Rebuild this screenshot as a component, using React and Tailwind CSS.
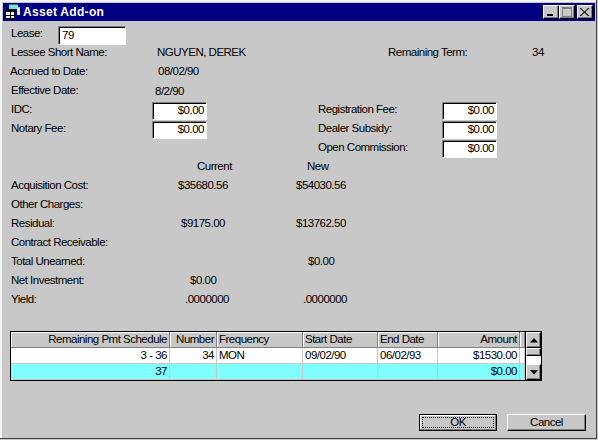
import React from 'react';

const raised = 'bg-[#c8c8c8] border border-t-white border-l-white border-r-black border-b-black shadow-[inset_-1px_-1px_0_#808080]';

function Field({ value, className = '' }) {
  return (
    <div className={`bg-white border border-t-[#808080] border-l-[#808080] border-r-white border-b-white shadow-[inset_1px_1px_0_#000] flex items-center ${className}`}>
      {value}
    </div>
  );
}

function FeeField({ value }) {
  return <Field value={value} className="w-[55px] h-[18px] mt-[3px] justify-end pr-[2px]" />;
}

function Row({ children }) {
  return <div className="h-[19px] flex items-center whitespace-nowrap">{children}</div>;
}

function AppIcon() {
  return (
    <svg width="17" height="16" viewBox="0 0 17 16" className="shrink-0">
      <path d="M5 0h9v3h2v7h-3V5H5z" fill="#7fe0e0" />
      <path d="M5 0h9v1H5z" fill="#008080" />
      <path d="M13 4h3v7h-3z" fill="#e8e8e8" />
      <path d="M1 5h10v10H1z" fill="#fff" />
      <path d="M1 5h10v3H1zM1 5h1v10H1zM6 5h1v10H6zM1 11h10v1H1zM1 14h10v1H1zM10 5h1v10h-1z" fill="#000" />
    </svg>
  );
}

function TitleButton({ className = '', children }) {
  return (
    <div className={`w-[16px] h-[14px] flex items-center justify-center ${raised} ${className}`}>
      <svg width="12" height="10" viewBox="0 0 12 10">{children}</svg>
    </div>
  );
}

function ScrollArrow({ up }) {
  return (
    <div className={`w-full h-[16px] flex items-center justify-center ${raised}`}>
      <svg width="8" height="5" viewBox="0 0 8 5">
        <path d={up ? 'M4 0l4 4.500H0z' : 'M0 0h8L4 4.500z'} fill="#000" />
      </svg>
    </div>
  );
}

const columns = [
  { w: 'w-[159px]', align: 'justify-end' },
  { w: 'w-[47px]', align: 'justify-end' },
  { w: 'w-[86px]', align: 'justify-start' },
  { w: 'w-[75px]', align: 'justify-start' },
  { w: 'w-[60px]', align: 'justify-start' },
  { w: 'w-[82px]', align: 'justify-end' },
  { w: 'w-[5px]', align: 'justify-end' },
];

function GridRow({ cells, header, className }) {
  return (
    <div className={`flex h-[16px] ${className}`}>
      {columns.map((col, i) => (
        <div
          key={i}
          className={`${col.w} shrink-0 flex items-center overflow-hidden pt-[1px] px-[2px] border-r border-b border-[#c8c8c8] ${col.align} ${header ? 'border-r-[#808080] border-b-[#808080] shadow-[inset_1px_1px_0_#fff]' : ''}`}
        >
          {cells[i]}
        </div>
      ))}
    </div>
  );
}

const figures = [
  { label: 'Acquisition Cost:', cur: '$35680.56', curPad: 'pl-[10px]', next: '$54030.56', nextPad: 'pl-[9px]' },
  { label: 'Other Charges:' },
  { label: 'Residual:', cur: '$9175.00', curPad: 'pl-[13px]', next: '$13762.50', nextPad: 'pl-[9px]' },
  { label: 'Contract Receivable:' },
  { label: 'Total Unearned:', next: '$0.00', nextPad: 'pl-[21px]' },
  { label: 'Net Investment:', cur: '$0.00', curPad: 'pl-[22px]' },
  { label: 'Yield:', cur: '.0000000', curPad: 'pl-[17px]', next: '.0000000', nextPad: 'pl-[16px]' },
];

export default function App() {
  return (
    <div className="w-[598px] h-[440px] overflow-hidden flex flex-col p-[3px] text-[11.5px] tracking-[-0.5px] leading-none text-black font-['Liberation_Sans',Arial,sans-serif] bg-[#c8c8c8] shadow-[inset_-1px_-1px_0_#c8c8c8,inset_-2px_-2px_0_#404040,inset_2px_2px_0_#f4f4f4]">
      <div className="h-[18px] bg-[#000080] flex items-center pl-[1px] pr-[2px] shrink-0">
        <AppIcon />
        <span className="ml-[2px] text-white font-bold text-[12px] tracking-[0.3px]">Asset Add-on</span>
        <div className="ml-auto flex items-center">
          <TitleButton><path d="M2 7h6v2H2z" fill="#000" /></TitleButton>
          <TitleButton>
            <path d="M1 0h10v10H1zM2 2v7h8V2z" fill="#808080" />
          </TitleButton>
          <TitleButton className="ml-[2px]">
            <path d="M2 1l3.500 3.500L9 1h1.500L6.200 5l4.300 4H9L5.500 5.700 2 9H.5l4.300-4L.5 1z" fill="#000" />
          </TitleButton>
        </div>
      </div>

      <div className="pt-[3px] pl-[7px] flex-1 flex flex-col">
        <Row>
          <span className="w-[48px] pl-[1px]">Lease:</span>
          <Field value="79" className="w-[68px] h-[19px] mt-[4px] pl-[3px]" />
        </Row>
        <Row>
          <span className="w-[147px] pl-[1px]">Lessee Short Name:</span>
          <span className="w-[231px]">NGUYEN, DEREK</span>
          <span className="w-[144px]">Remaining Term:</span>
          <span>34</span>
        </Row>
        <Row>
          <span className="w-[148px]">Accrued to Date:</span>
          <span>08/02/90</span>
        </Row>
        <Row>
          <span className="w-[145px] pl-[1px]">Effective Date:</span>
          <span className="mt-[2px]">8/2/90</span>
        </Row>
        <Row>
          <span className="w-[142px] pl-[1px]">IDC:</span>
          <FeeField value="$0.00" />
          <span className="w-[124px] ml-[111px]">Registration Fee:</span>
          <FeeField value="$0.00" />
        </Row>
        <Row>
          <span className="w-[142px] pl-[1px]">Notary Fee:</span>
          <FeeField value="$0.00" />
          <span className="w-[124px] ml-[111px]">Dealer Subsidy:</span>
          <FeeField value="$0.00" />
        </Row>
        <Row>
          <span className="w-[308px]" />
          <span className="w-[124px]">Open Commission:</span>
          <FeeField value="$0.00" />
        </Row>
        <Row>
          <span className="w-[187px]" />
          <span className="w-[110px]">Current</span>
          <span>New</span>
        </Row>
        {figures.map((f) => (
          <Row key={f.label}>
            <span className="w-[158px] pl-[1px]">{f.label}</span>
            <span className={`w-[119px] ${f.curPad || ''}`}>{f.cur}</span>
            <span className={f.nextPad || ''}>{f.next}</span>
          </Row>
        ))}

        <div className="mt-[22px] flex">
          <div className="border border-black shrink-0">
            <GridRow
              header
              className="bg-[#c8c8c8]"
              cells={['Remaining Pmt Schedule', 'Number', 'Frequency', 'Start Date', 'End Date', 'Amount', '']}
            />
            <GridRow
              className="bg-white"
              cells={['3 -  36', '34', 'MON', '09/02/90', '06/02/93', '$1530.00', '']}
            />
            <GridRow
              className="bg-[#80ffff]"
              cells={['37', '', '', '', '', '$0.00', '']}
            />
          </div>
          <div className="flex flex-col w-[16px] border-y border-r border-black shrink-0">
            <ScrollArrow up />
            <div className={`h-[8px] ${raised}`} />
            <div className="flex-1 bg-white" />
            <ScrollArrow />
          </div>
        </div>

        <div className="mt-auto mb-[6px] flex justify-end pr-[9px] gap-[10px]">
          <button className="w-[78px] h-[17px] bg-[#c8c8c8] border border-black shadow-[inset_-1px_-1px_0_#808080,inset_1px_1px_0_#fff] flex items-center justify-center p-[2px]">
            <span className="w-full h-full border border-dotted border-black flex items-center justify-center">OK</span>
          </button>
          <button className={`w-[79px] h-[17px] flex items-center justify-center ${raised}`}>Cancel</button>
        </div>
      </div>
    </div>
  );
}
